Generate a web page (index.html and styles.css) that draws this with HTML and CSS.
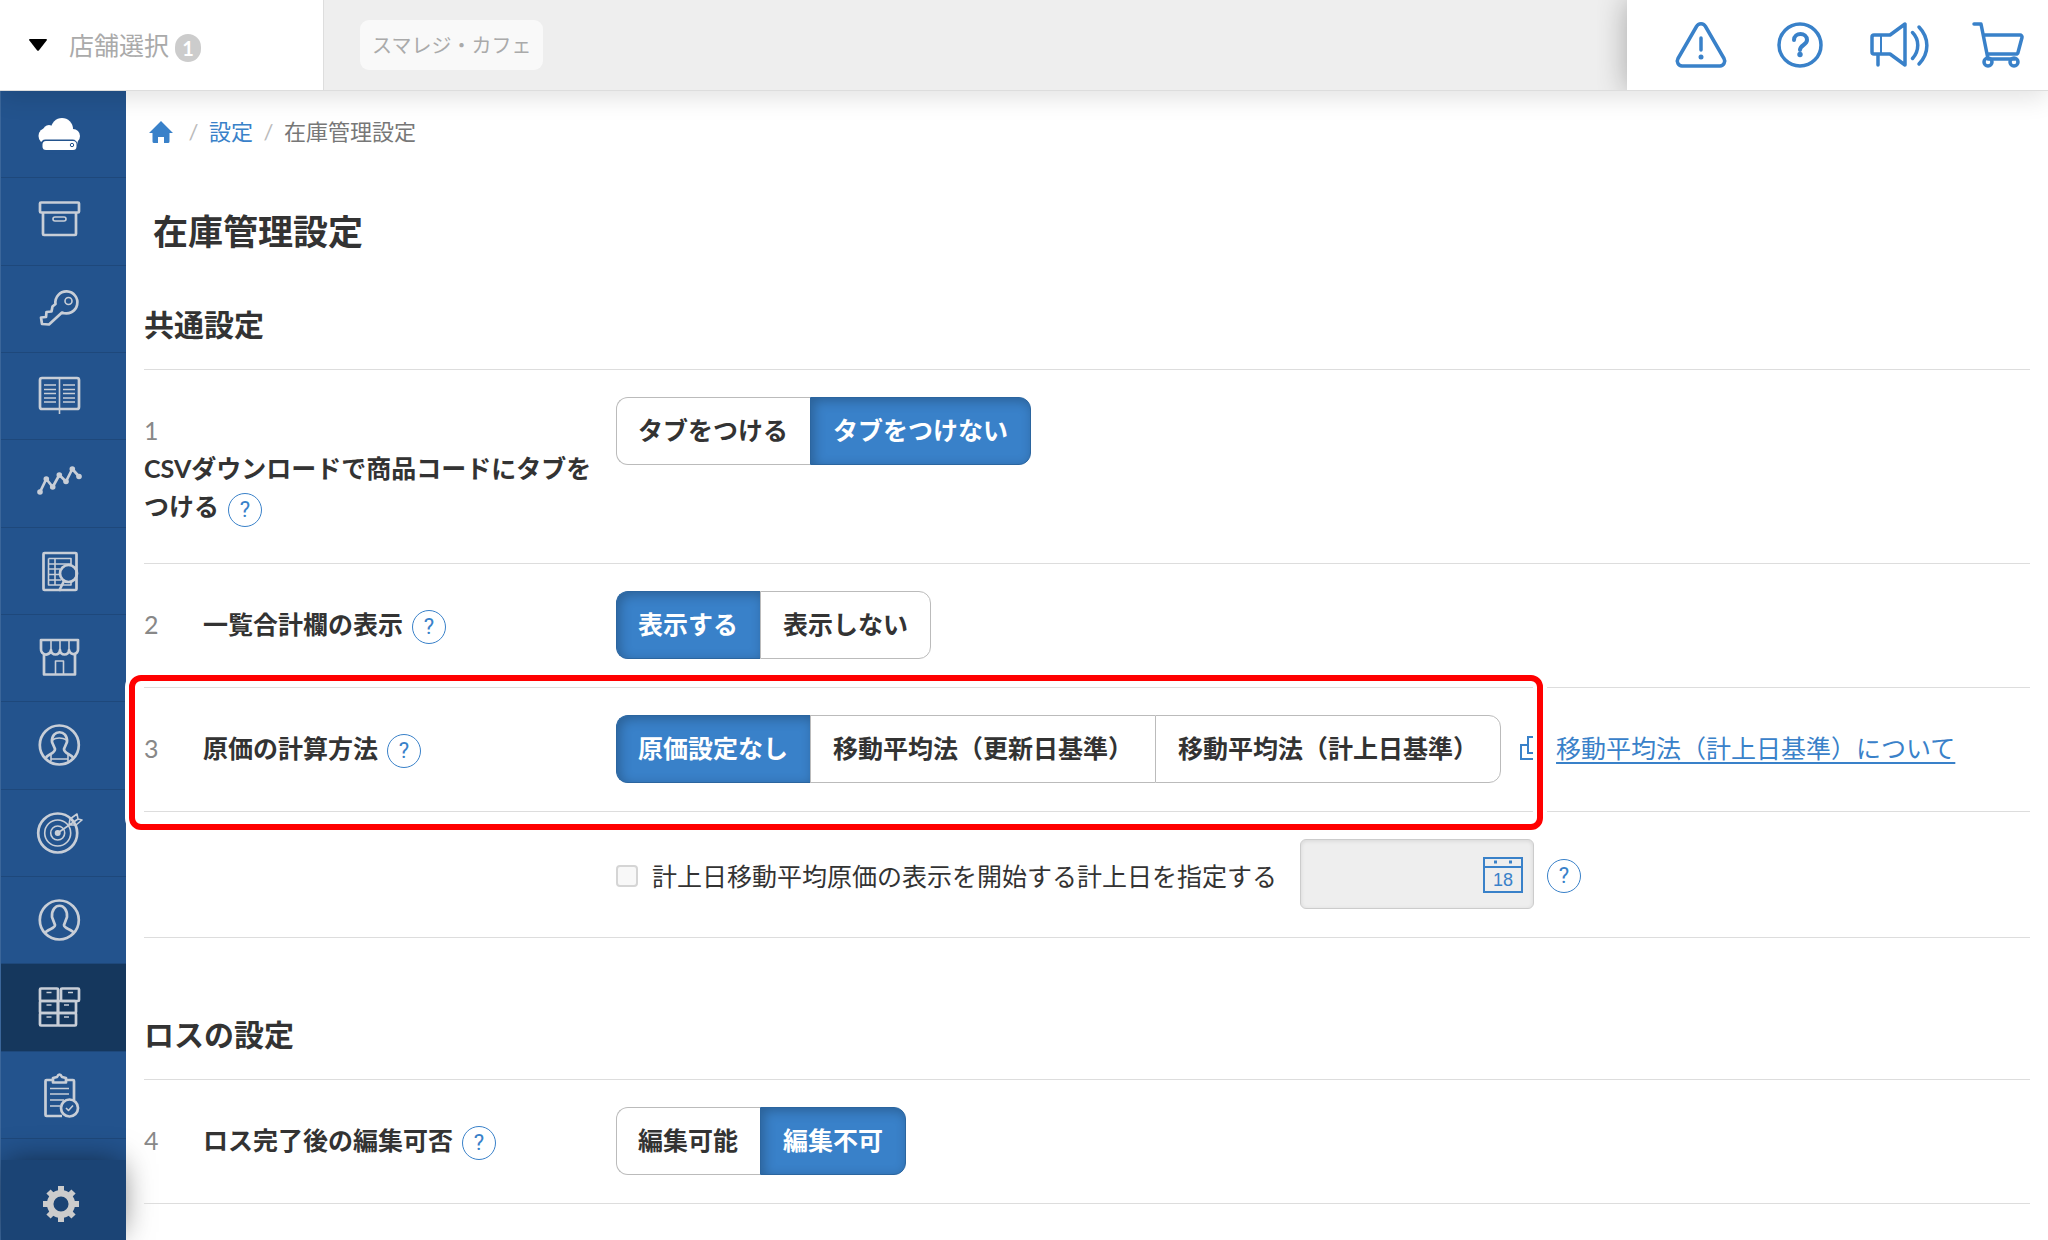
FILE: index.html
```html
<!DOCTYPE html>
<html lang="ja">

<head>
    <meta charset="UTF-8" />
    <meta name="viewport" content="width=device-width, initial-scale=1" />
    <title>在庫管理設定</title>
    <link rel="stylesheet" href="styles.css">
</head>

<body>

    <header class="header">
        <button type="button" class="store-select">
            <svg class="caret" viewBox="0 0 18 12"><path d="M1 0h16q1.500 0 .6 1.500l-7.600 9.800q-1 1-2 0L.4 1.500Q-.5 0 1 0z" /></svg>
            <span>店舗選択</span>
            <span class="count">1</span>
        </button>
        <div class="store-list">
            <span class="store-chip">スマレジ・カフェ</span>
        </div>
        <nav class="tools">
            <a href="#" aria-label="お知らせ">
                <svg viewBox="0 0 60 50">
                    <path d="M25.500 6.500a5 5 0 0 1 9 0l18.500 32a5 5 0 0 1-4 7.500H11a5 5 0 0 1-4-7.500z" />
                    <path d="M30 18v12" /><circle class="dot" cx="30" cy="37" r="2.500" />
                </svg>
            </a>
            <a href="#" aria-label="ヘルプ">
                <svg viewBox="0 0 60 50">
                    <circle cx="30" cy="25" r="21" />
                    <path d="M24 20c0-8 13-8 13 0 0 5-7 5-7 10" stroke-width="4" /><circle class="dot" cx="30" cy="34.500" r="2.700" />
                </svg>
            </a>
            <a href="#" aria-label="音声">
                <svg viewBox="0 0 60 50">
                    <path d="M5 15h16L36 4v41L21 34H5a2 2 0 0 1-2-2V17a2 2 0 0 1 2-2zM9 34v11" />
                    <path d="M12 15v19" stroke-width="2" />
                    <path d="M43.500 12.500c7 7 7 18 0 26M50 7c10.500 11 10.500 26 0 37" />
                </svg>
            </a>
            <a href="#" aria-label="カート">
                <svg viewBox="0 0 60 50">
                    <path d="M6 4h7l7 35M16 15h36a2 2 0 0 1 2 2.500l-4 15a2 2 0 0 1-2 1.500H19M20 39h27" />
                    <circle cx="20" cy="42" r="4" /><circle cx="46" cy="42" r="4" />
                </svg>
            </a>
        </nav>
    </header>

    <div class="layout">

        <aside class="sidebar">
            <ul class="menu">
                <li><a href="#" class="home" aria-label="ホーム">
                    <svg viewBox="0 0 48 48">
                        <g class="solid">
                            <circle cx="27" cy="19" r="11" /><circle cx="14" cy="21" r="6" /><circle cx="11.500" cy="26" r="8" /><circle cx="38" cy="26" r="7" />
                            <path d="M5 26h39l-2 9H7z" />
                        </g>
                        <rect class="drive" x="5.500" y="29.500" width="37" height="14" rx="5" />
                        <rect class="solid" x="7.500" y="31" width="34" height="9" rx="3.500" />
                        <circle class="led" cx="37" cy="35" r="1.700" />
                    </svg>
                </a></li>
                <li><a href="#" aria-label="商品">
                    <svg viewBox="0 0 48 48">
                        <rect x="5" y="5.500" width="39" height="10" rx="1" />
                        <path d="M8 16v21q0 1 1 1h31q1 0 1-1V16" />
                        <rect class="thin" x="18" y="20" width="13" height="4" rx="2" />
                    </svg>
                </a></li>
                <li><a href="#" aria-label="権限">
                    <svg viewBox="0 0 48 48">
                        <path d="M27 27.500L14 39.500 7 39 6 32.500l5-.5.5-5 5-.5 1-5 3-2.500A11 11 0 1 1 27 27.500z" />
                        <circle class="thin" cx="33.500" cy="16" r="3.500" />
                    </svg>
                </a></li>
                <li><a href="#" aria-label="台帳">
                    <svg viewBox="0 0 48 48">
                        <rect x="5" y="6" width="39" height="31" rx="2" />
                        <path class="thin" d="M24.500 6v36M9 13h12M9 17.500h12M9 21.500h12M9 26h12M9 30h12M28 13h12M28 17.500h12M28 21.500h12M28 26h12M28 30h12" />
                    </svg>
                </a></li>
                <li><a href="#" aria-label="売上分析">
                    <svg viewBox="0 0 48 48">
                        <path d="M5 33l6.300-13 6.400 8 6.600-12 6.700 6.500L37.300 10l6.700 7.500" />
                        <g class="solid">
                            <circle cx="5" cy="33" r="2.800" /><circle cx="11.300" cy="20" r="2.800" /><circle cx="17.700" cy="28" r="2.800" /><circle cx="24.300" cy="16" r="2.800" />
                            <circle cx="31" cy="22.500" r="2.800" /><circle cx="37.300" cy="10" r="2.800" /><circle cx="44" cy="17.500" r="2.800" />
                        </g>
                    </svg>
                </a></li>
                <li><a href="#" aria-label="取引検索">
                    <svg viewBox="0 0 48 48">
                        <path d="M28 43H9.500q-1 0-1-1V7q0-1 1-1h31q1 0 1 1v35q0 1-1 1H28" />
                        <path class="thin" d="M13.500 11.500H36V19M13.500 11.500V38H36v-3M20 11.500V38M13.500 17H36M13.500 22H25M13.500 27.500H25M13.500 33H26" />
                        <circle cx="33.500" cy="26.500" r="8.500" />
                        <path d="M29 34l-5 10" />
                    </svg>
                </a></li>
                <li><a href="#" aria-label="店舗">
                    <svg viewBox="0 0 48 48">
                        <path d="M6 6h37v9a4.500 4.500 0 0 1-9 1 4.500 4.500 0 0 1-9 0 4.500 4.500 0 0 1-9 0 4.500 4.500 0 0 1-10-1zM9 19v21.500h31V19" />
                        <path class="thin" d="M16 6v10M25 6v10M34 6v10M20.500 40V27h8v13" />
                    </svg>
                </a></li>
                <li><a href="#" aria-label="スタッフ">
                    <svg viewBox="0 0 48 48">
                        <circle cx="24.300" cy="24" r="19.500" />
                        <path d="M11 37c1-4 9-4 9-9l-3-7c-1-13 16-13 15 0l-3 7c0 5 8 5 9 9" />
                        <path class="thin" d="M17 19q7-4 15 0M16 34v6M33 34v6M16 38h17" />
                    </svg>
                </a></li>
                <li><a href="#" aria-label="目標">
                    <svg viewBox="0 0 48 48">
                        <circle cx="22.700" cy="24" r="19.500" />
                        <circle class="thin" cx="22.700" cy="24" r="13" /><circle class="thin" cx="22.700" cy="24" r="7" />
                        <circle class="solid" cx="22.700" cy="24" r="3" />
                        <path class="thin" d="M22.700 24L43 10M34 16l1-6 7-5 1 5 4 1-6 5z" />
                    </svg>
                </a></li>
                <li><a href="#" aria-label="会員">
                    <svg viewBox="0 0 48 48">
                        <circle cx="24.300" cy="24" r="19.500" />
                        <path d="M10 37c2-4 10-4 10-8l-3-8c-1-15 16-15 15 0l-3 8c0 4 8 4 10 8" />
                    </svg>
                </a></li>
                <li><a href="#" class="active" aria-label="在庫">
                    <svg viewBox="0 0 48 48">
                        <rect x="5" y="5.500" width="18" height="12.500" rx="1" /><rect x="26" y="5.500" width="18" height="12.500" rx="1" />
                        <rect x="5" y="18" width="18" height="12" rx="1" /><rect x="23" y="18" width="18" height="12" rx="1" />
                        <rect x="5" y="30" width="18" height="12.500" rx="1" /><rect x="23" y="30" width="18" height="12.500" rx="1" />
                        <path class="thin" d="M11.500 9.500h5M33 9.500h5M11.500 22h5M29 22h5M11.500 34h5M29 34h5" />
                    </svg>
                </a></li>
                <li><a href="#" aria-label="棚卸">
                    <svg viewBox="0 0 48 48">
                        <path d="M27 45H11.500q-1 0-1-1V10q0-1 1-1H17M32 9h6q1 0 1 1v19" />
                        <path d="M18 11.500V7l4-1q2.500-5 5 0l4 1v4.500z" />
                        <path class="thin" d="M15 17.500h19M15 23h19M15 29h14M15 35h10M31 37l2.500 2.500 4.500-5" />
                        <circle cx="34.500" cy="37" r="8.500" />
                    </svg>
                </a></li>
            </ul>
            <a href="#" class="settings" aria-label="設定">
                <svg viewBox="0 0 48 48">
                    <circle cx="24" cy="24" r="10.800" stroke-width="6.500" />
                    <path stroke-width="6" d="M24 6v6M24 36v6M6 24h6M36 24h6M11.500 11.500l4 4M32.500 32.500l4 4M11.500 36.500l4-4M32.500 15.500l4-4" />
                </svg>
            </a>
        </aside>

        <main class="content">
            <nav class="breadcrumb">
                <a href="#" class="top" aria-label="ホーム">
                    <svg viewBox="0 0 24 22"><path d="M12 0l12 12h-3.500v8.500q0 1.500-1.500 1.500h-4v-6H9v6H5q-1.500 0-1.500-1.500V12H0z" /></svg>
                </a>
                <span class="slash">/</span>
                <a href="#">設定</a>
                <span class="slash">/</span>
                <span>在庫管理設定</span>
            </nav>

            <h1>在庫管理設定</h1>

            <section>
                <h2>共通設定</h2>

                <div class="row">
                    <div class="item">
                        <span class="num">1</span><span class="name">CSVダウンロードで商品コードにタブをつける<button type="button" class="help">?</button></span>
                    </div>
                    <div class="field">
                        <div class="switch">
                            <button type="button">タブをつける</button>
                            <button type="button" class="on">タブをつけない</button>
                        </div>
                    </div>
                </div>

                <div class="row">
                    <div class="item">
                        <span class="num">2</span><span class="name">一覧合計欄の表示<button type="button" class="help">?</button></span>
                    </div>
                    <div class="field">
                        <div class="switch">
                            <button type="button" class="on">表示する</button>
                            <button type="button">表示しない</button>
                        </div>
                    </div>
                </div>

                <div class="row marked">
                    <div class="item">
                        <span class="num">3</span><span class="name">原価の計算方法<button type="button" class="help">?</button></span>
                    </div>
                    <div class="field">
                        <div class="switch">
                            <button type="button" class="on">原価設定なし</button>
                            <button type="button">移動平均法（更新日基準）</button>
                            <button type="button">移動平均法（計上日基準）</button>
                        </div>
                        <a href="#" class="about">
                            <svg viewBox="0 0 27 24"><path d="M8 9H1v14h18v-6M8 1h18v16H8z" /></svg>
                            <span>移動平均法（計上日基準）について</span>
                        </a>
                    </div>
                </div>

                <div class="row">
                    <div class="item"></div>
                    <div class="field start-date">
                        <input type="checkbox" id="use-date" disabled />
                        <label for="use-date">計上日移動平均原価の表示を開始する計上日を指定する</label>
                        <div class="date">
                            <input type="text" aria-label="計上日" disabled />
                            <svg viewBox="0 0 40 36">
                                <path d="M1 1h38v34H1zM1 10h38" />
                                <path d="M11 5h3M26 5h3" stroke-width="3" />
                                <text x="20" y="29">18</text>
                            </svg>
                        </div>
                        <button type="button" class="help">?</button>
                    </div>
                </div>
            </section>

            <section>
                <h2>ロスの設定</h2>

                <div class="row">
                    <div class="item">
                        <span class="num">4</span><span class="name">ロス完了後の編集可否<button type="button" class="help">?</button></span>
                    </div>
                    <div class="field">
                        <div class="switch">
                            <button type="button">編集可能</button>
                            <button type="button" class="on">編集不可</button>
                        </div>
                    </div>
                </div>
            </section>
        </main>

    </div>

</body>

</html>
```

FILE: styles.css
```css
:root {
    --blue: #3981c9;
    --navy: #23538d;
    --text: #333;
    --line: #ddd;
}

*,
*::after {
    box-sizing: border-box;
}

body {
    margin: 0;
    height: 100vh;
    display: flex;
    flex-direction: column;
    overflow: hidden;
    background: #fff;
    color: var(--text);
    font-family: Lato, "Noto Sans CJK JP", sans-serif;
    font-size: 25px;
    line-height: 38px;
}

button,
input {
    margin: 0;
    font: inherit;
    color: inherit;
}

a {
    color: var(--blue);
    text-decoration: none;
}

/* header */
.header {
    position: relative;
    z-index: 2;
    display: flex;
    flex: none;
    height: 91px;
    background: #fff;
    border-bottom: 1px solid var(--line);
    box-shadow: 0 6px 24px rgba(0, 0, 0, 0.12);
}

.store-select {
    display: flex;
    align-items: center;
    width: 324px;
    padding: 0 0 0 29px;
    border: 0;
    border-right: 1px solid var(--line);
    background: #fff;
    color: #aaa;
}

.caret {
    width: 18px;
    height: 12px;
    margin-right: 22px;
    fill: #000;
}

.count {
    width: 26px;
    height: 28px;
    margin: 6px 0 0 6px;
    border-radius: 14px;
    background: #ccc;
    color: #fff;
    font-size: 20px;
    font-weight: bold;
    line-height: 28px;
    text-align: center;
}

.store-list {
    display: flex;
    flex: 1;
    align-items: center;
    padding-left: 36px;
    background: #eee;
}

.store-chip {
    padding: 6px 12px;
    border-radius: 9px;
    background: #f9f9f9;
    color: #aaa;
    font-size: 20px;
}

.tools {
    display: flex;
    align-items: center;
    gap: 39px;
    padding: 0 20px 0 44px;
    box-shadow: 0 0 28px rgba(0, 0, 0, 0.3);
    clip-path: inset(0 0 0 -30px);
    background: #fff;
}

.tools a {
    display: flex;
}

.tools svg {
    width: 60px;
    height: 50px;
    fill: none;
    stroke: var(--blue);
    stroke-width: 3.500;
    stroke-linecap: round;
    stroke-linejoin: round;
}

.tools .dot {
    fill: var(--blue);
    stroke: none;
}

.layout {
    display: flex;
    flex: 1;
    min-height: 0;
}

/* sidebar */
.sidebar {
    display: flex;
    flex: none;
    flex-direction: column;
    width: 126px;
    background: var(--navy);
    border-left: 1px solid #3b669a;
}

.menu {
    display: flex;
    flex: 1;
    flex-direction: column;
    margin: 0;
    padding: 0 0 21px;
    list-style: none;
}

.menu li {
    display: flex;
    flex: 1;
    border-bottom: 1px solid #1e487b;
}

.menu a {
    display: flex;
    flex: 1;
    align-items: center;
    justify-content: center;
    padding-right: 9px;
}

.menu .active {
    background: #15375d;
}

.sidebar svg {
    width: 48px;
    height: 48px;
    fill: none;
    stroke: #c8ced7;
    stroke-width: 2.700;
    stroke-linejoin: round;
}

.sidebar .thin {
    stroke-width: 1.600;
}

.sidebar .solid {
    fill: #c8ced7;
    stroke: none;
}

.home .solid {
    fill: #fff;
}

.home .drive {
    fill: var(--navy);
    stroke: none;
}

.home .led {
    stroke: var(--navy);
    stroke-width: 1;
}

.settings {
    display: flex;
    align-items: center;
    justify-content: center;
    height: 80px;
    padding: 8px 5px 0 0;
    background: #1b4475;
    box-shadow: 0 -2px 32px -6px rgba(0, 0, 0, 0.6);
}

.settings svg {
    stroke: #ccc;
}

/* content */
.content {
    flex: 1;
    min-width: 0;
    padding: 25px 18px 0;
}

.breadcrumb {
    display: flex;
    align-items: center;
    height: 32px;
    padding-left: 5px;
    color: #777;
    font-size: 22px;
}

.breadcrumb a {
    display: flex;
}

.breadcrumb .top {
    padding-right: 5px;
}

.breadcrumb svg {
    width: 24px;
    height: 22px;
    fill: var(--blue);
}

.slash {
    width: 31px;
    color: #bbb;
    text-align: center;
}

h1 {
    margin: 59px 0 0 9px;
    font-size: 35px;
    line-height: 48px;
}

h2 {
    margin: 47px 0 0;
    padding-bottom: 23px;
    border-bottom: 1px solid var(--line);
    font-size: 30px;
    line-height: 44px;
}

section + section h2 {
    margin-top: 74px;
}

.row {
    position: relative;
    display: flex;
    border-bottom: 1px solid var(--line);
}

.item {
    width: 472px;
    padding: 41px 16px 36px 0;
}

.num {
    display: inline-block;
    width: 59px;
    color: #888;
}

.name {
    display: inline-block;
    font-weight: bold;
}

.help {
    width: 34px;
    height: 34px;
    padding: 0;
    border: 1px solid var(--blue);
    border-radius: 50%;
    background: #fff;
    color: var(--blue);
    font-family: Roboto, sans-serif;
    font-size: 22px;
    font-weight: normal;
    line-height: 32px;
}

.name .help {
    margin-left: 9px;
    vertical-align: middle;
}

.field {
    display: flex;
    flex: 1;
    align-items: center;
    align-self: flex-start;
    padding: 27px 0 28px;
}

.switch {
    display: flex;
}

.switch button {
    height: 68px;
    padding: 0 22px 2px;
    border: 1px solid #bbb;
    border-right-width: 0;
    background: #fff;
    font-weight: bold;
}

.switch button:first-child {
    padding-left: 21px;
    border-radius: 12px 0 0 12px;
}

.switch button:last-child {
    border-right-width: 1px;
    border-radius: 0 12px 12px 0;
}

.switch .on {
    border-color: #2b659f;
    background: var(--blue);
    box-shadow: inset 3px 3px 12px rgba(0, 0, 0, 0.25);
    color: #fff;
}

.about {
    display: flex;
    align-items: center;
    margin-left: 19px;
    padding-bottom: 2px;
}

.about svg {
    width: 27px;
    height: 24px;
    margin-right: 9px;
    fill: none;
    stroke: var(--blue);
    stroke-width: 2;
}

.about span {
    text-decoration: underline;
    text-decoration-thickness: 2px;
    text-underline-offset: 4px;
}

/* red frame round the cost method row */
.marked::after {
    content: '';
    position: absolute;
    top: -13px;
    bottom: -19px;
    left: -15px;
    width: 1414px;
    border: 6px solid #f00;
    border-radius: 12px;
    box-shadow: 0 0 0 4px #fff, inset 0 0 0 4px #fff;
    pointer-events: none;
}

.start-date {
    padding-bottom: 23px;
}

.field input[type=checkbox] {
    appearance: none;
    width: 22px;
    height: 22px;
    margin-right: 14px;
    border: 2px solid #d5d5d5;
    border-radius: 4px;
    background: #f8f8f8;
}

.date {
    position: relative;
    margin: 0 13px 5px 23px;
}

.date input {
    display: block;
    width: 234px;
    height: 70px;
    padding: 0 60px 0 12px;
    border: 1px solid #ccc;
    border-radius: 6px;
    background: #eee;
    box-shadow: inset 0 1px 4px rgba(0, 0, 0, 0.1);
}

.date svg {
    position: absolute;
    top: 18px;
    right: 11px;
    width: 40px;
    height: 36px;
    fill: none;
    stroke: var(--blue);
    stroke-width: 2;
}

.date text {
    fill: var(--blue);
    stroke: none;
    font-family: "Liberation Sans", sans-serif;
    font-size: 18px;
    text-anchor: middle;
}
```
